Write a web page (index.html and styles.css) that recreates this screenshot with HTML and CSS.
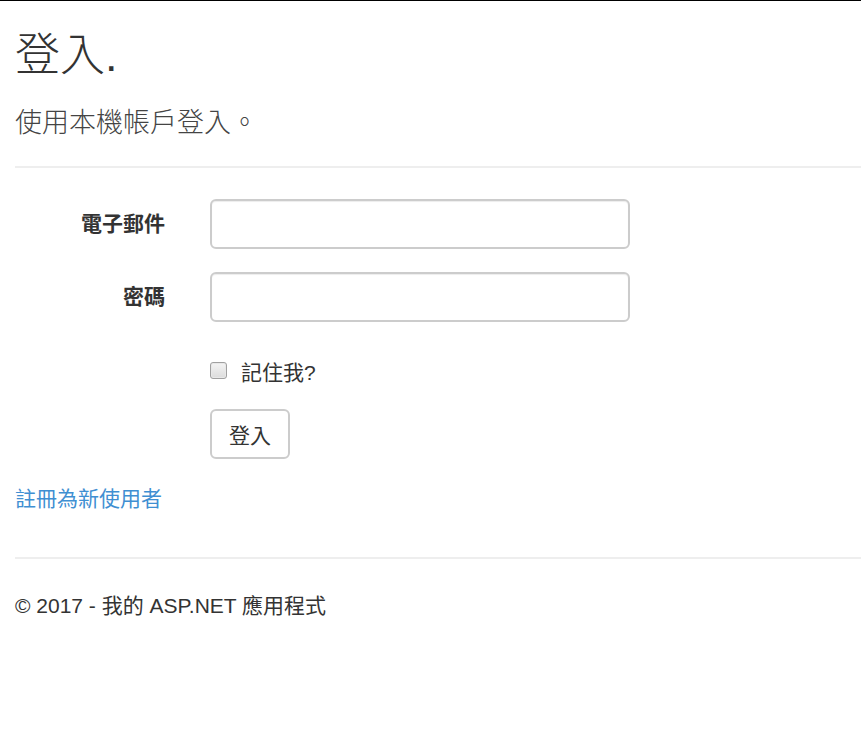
FILE: index.html
```html
<!DOCTYPE html>
<html lang="zh-Hant">
<head>
<meta charset="utf-8">
<title>登入</title>
<link rel="stylesheet" href="styles.css">
</head>
<body>
<div class="topbar"></div>
<div class="body-content">
  <h2 class="title">登入.</h2>
  <h4 class="subtitle">使用本機帳戶登入。</h4>
  <hr class="rule">
  <form class="form">
    <div class="form-row">
      <label class="form-label" for="email">電子郵件</label>
      <input class="form-input" id="email" type="text">
    </div>
    <div class="form-row">
      <label class="form-label" for="pw">密碼</label>
      <input class="form-input" id="pw" type="password">
    </div>
    <div class="form-row">
      <span></span>
      <label class="check"><span class="check-box"></span><span class="check-text">記住我?</span></label>
    </div>
    <div class="form-row">
      <span></span>
      <button class="btn" type="button">登入</button>
    </div>
  </form>
  <p class="register"><a href="#">註冊為新使用者</a></p>
  <hr class="rule rule-footer">
  <footer class="footer">© 2017 - 我的 ASP.NET 應用程式</footer>
</div>
</body>
</html>
```
FILE: styles.css
```css
html, body {
  margin: 0;
  padding: 0;
  background: #fff;
}
body {
  font-family: "Liberation Sans", "Noto Sans CJK TC", sans-serif;
  color: #333;
  font-size: 21px;
  line-height: 30px;
}
.topbar {
  height: 1px;
  background: #000;
}
.body-content {
  padding-left: 15px;
}
.title {
  margin: 30px 0 0;
  font-size: 45px;
  line-height: 50px;
  font-weight: 300;
  color: #333;
}
.subtitle {
  margin: 27px 0 0;
  font-size: 27px;
  line-height: 30px;
  font-weight: 300;
  color: #444;
}
.rule {
  margin: 28px 0 0;
  border: 0;
  border-top: 2px solid #eee;
  height: 0;
}
.form {
  margin-top: 31px;
}
.form-row {
  display: grid;
  grid-template-columns: 150px 420px;
  column-gap: 45px;
  align-items: center;
  margin-bottom: 23px;
}
.form-label {
  text-align: right;
  font-weight: 700;
  color: #333;
}
.form-input {
  box-sizing: border-box;
  width: 420px;
  height: 50px;
  border: 2px solid #ccc;
  border-radius: 6px;
  background: #fff;
  box-shadow: inset 0 1px 1px rgba(0,0,0,0.075);
  margin: 0;
  padding: 6px 18px;
  font-size: 21px;
}
.check {
  display: flex;
  align-items: flex-start;
  margin-top: 13px;
  margin-bottom: -2px;
}
.check-box {
  box-sizing: border-box;
  flex: none;
  width: 17px;
  height: 17px;
  margin-top: 4px;
  border: 1px solid #a0a0a0;
  border-radius: 3px;
  background: linear-gradient(#f4f4f4, #dcdcdc);
  box-shadow: inset 0 0 0 1px #e8e8e8;
}
.check-text {
  margin-left: 14px;
  font-weight: 400;
}
.btn {
  box-sizing: border-box;
  justify-self: start;
  width: 80px;
  height: 50px;
  border: 2px solid #ccc;
  border-radius: 6px;
  background: #fff;
  color: #333;
  font-family: "Liberation Sans", "Noto Sans CJK TC", sans-serif;
  font-size: 21px;
  padding: 0;
  margin-top: 0;
}
.register {
  margin: 25px 0 0;
}
.register a {
  color: #3f8fd2;
  text-decoration: none;
}
.rule-footer {
  margin-top: 43px;
}
.footer {
  margin-top: 32px;
}
```
